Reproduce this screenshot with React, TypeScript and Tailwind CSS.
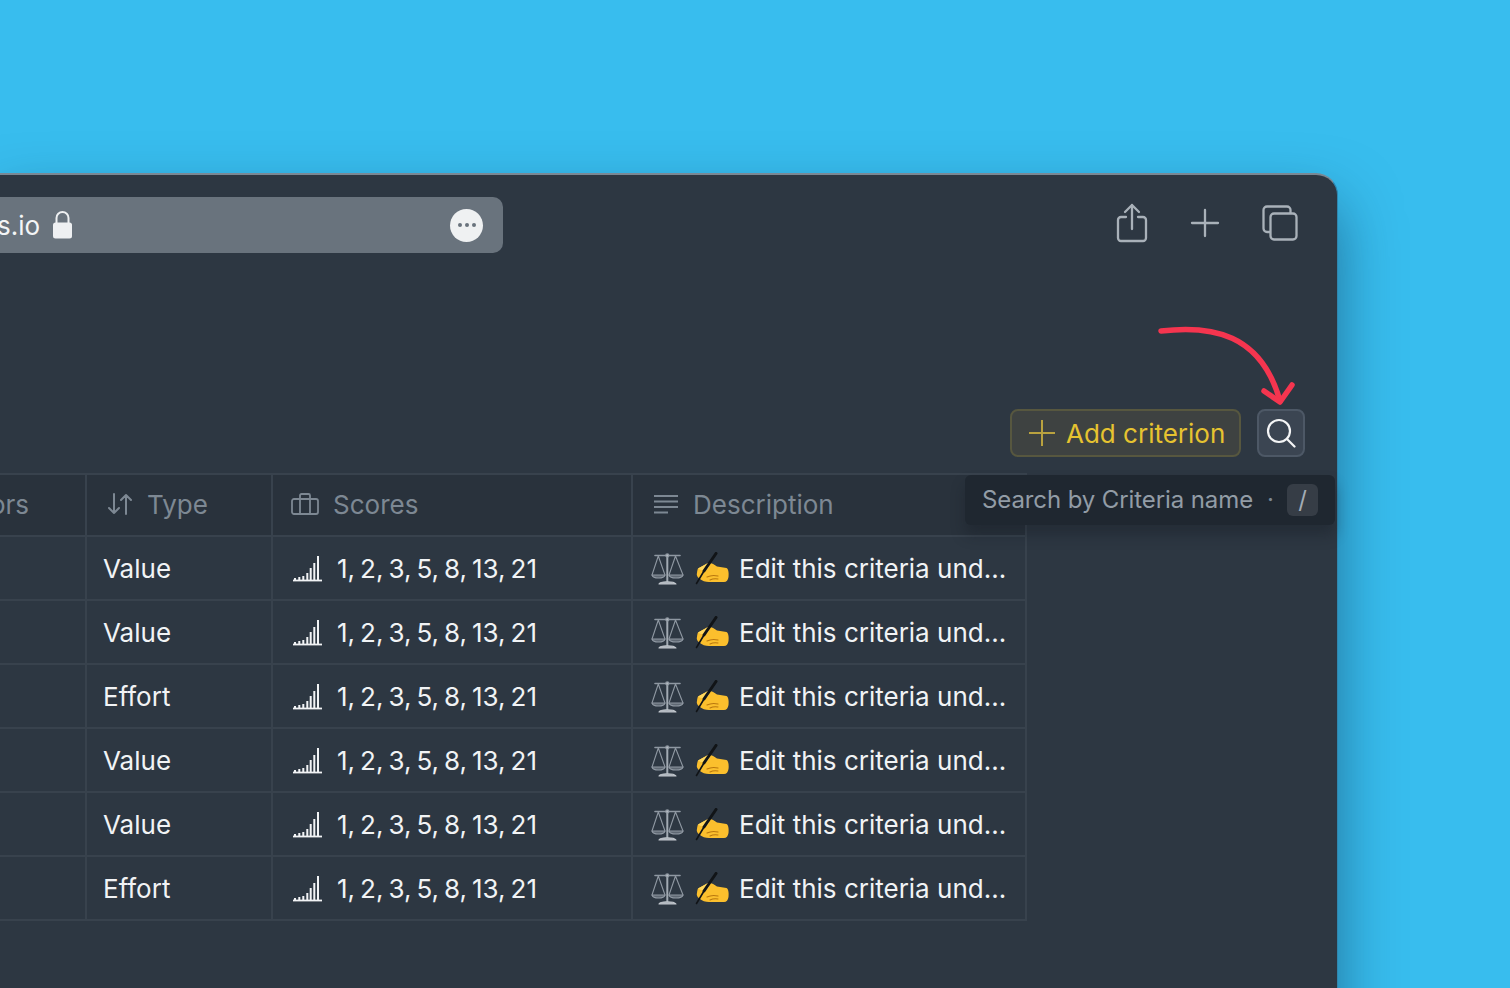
import React from "react";

const ROWS = ["Value", "Value", "Effort", "Value", "Value", "Effort"];

const COL_1 = "w-[87px] shrink-0 border-r-2 border-[#38424d]";
const COL_2 = "w-[186px] shrink-0 border-r-2 border-[#38424d]";
const COL_3 = "w-[360px] shrink-0 border-r-2 border-[#38424d]";
const COL_4 = "w-[394px] shrink-0 border-r-2 border-[#38424d]";

const SignalIcon: React.FC = () => (
  <svg width="30" height="26" viewBox="0 0 30 26" fill="none" stroke="#f1f3f5">
    <path d="M1 24.500h29" strokeWidth="1.800" />
    <path d="M3 24v-2M7.300 24v-3M11.300 24v-4M15.300 24v-7M18.700 24V12M22.300 24V7M26 24V0" strokeWidth="2" />
  </svg>
);

const ScaleIcon: React.FC = () => (
  <svg width="34" height="34" viewBox="0 0 34 34" fill="none" stroke="#8f98a2" strokeWidth="1.100" strokeLinecap="round" strokeLinejoin="round">
    <path d="M16.300 3v26" strokeWidth="2" stroke="#a2aab3" />
    <path d="M4 3.500h25" strokeWidth="1.600" />
    <path d="M7.300 4 1 23M7.300 4 14 23M24.500 4 18 23M24.500 4 32 23" />
    <path d="M1 23c1 4 12 4 13 0zM18 23c1 4 13 4 14 0z" fill="#5f6873" />
    <path d="M8 32c1-3 15-3 17 0z" fill="#a9b0b8" stroke="#c3c8ce" />
    <circle cx="16.300" cy="3.500" r="1.600" fill="#b5bbc2" />
  </svg>
);

const WritingHand: React.FC = () => (
  <svg width="36" height="34" viewBox="0 0 36 34">
    <path d="M3 16.500 13 11c3-1 6 2 9 3.500l9.500 1.500c2 1 2.500 5 2 9-.5 3-2 5-4.500 5H17c-4 0-7.500 0-10.500-2C3.500 26 1 24 2 21c.2-2 .5-3.500 1-4.500z" fill="#fbbf2d" />
    <path d="M3 16.500 13 11c2 2 1 5-1 6.500-3 1.500-6 1-9-1z" fill="#ffd75e" />
    <path d="M12 25c3-1.500 7-2 11-1M15 28c2-1 5-1.500 8-1" stroke="#b9770e" strokeWidth="1.100" fill="none" strokeLinecap="round" />
    <path d="M21 1.500 9 19" stroke="#111417" strokeWidth="3" fill="none" strokeLinecap="round" />
    <path d="M9 19 1.500 31.500" stroke="#111417" strokeWidth="1.600" fill="none" strokeLinecap="round" />
  </svg>
);

const HeaderCell: React.FC<{ className: string; icon?: React.ReactNode; label: string }> = ({ className, icon, label }) => (
  <div className={`${className} flex items-center pb-[2px]`}>
    {icon}
    <span>{label}</span>
  </div>
);

export default function App() {
  return (
    <div className="relative h-[988px] w-[1510px] overflow-hidden bg-[#38bdee] pt-[173px] font-['Inter',sans-serif]">
      <div className="h-[900px] w-[1338px] rounded-tr-[22px] border-t-2 border-r border-t-[#7a8894] border-r-[#2f86ae] bg-[#2d3742] shadow-[0_30px_60px_rgba(10,40,70,0.5)]">
        {/* barre du navigateur */}
        <div className="flex items-start justify-between pt-[22px] pr-[39px]">
          <div className="flex h-[56px] w-[503px] items-center justify-between rounded-r-[10px] bg-[#69737d] pr-[20px] text-[26px] text-[#f4f5f6]">
            <div className="-ml-[3px] flex items-center gap-[12px]">
              <span>s.io</span>
              <svg width="21" height="30" viewBox="0 0 21 30" fill="none">
                <path d="M4.500 14V8a6 6 0 0 1 12 0v6" stroke="#eef0f2" strokeWidth="2" />
                <rect x="1" y="12.500" width="19" height="16" rx="2.500" fill="#eef0f2" />
              </svg>
            </div>
            <div className="flex h-[33px] w-[33px] items-center justify-center gap-[3px] rounded-full bg-[#eff1f2]">
              <span className="h-[4px] w-[4px] rounded-full bg-[#69737d]" />
              <span className="h-[4px] w-[4px] rounded-full bg-[#69737d]" />
              <span className="h-[4px] w-[4px] rounded-full bg-[#69737d]" />
            </div>
          </div>
          <div className="flex items-center gap-[42px] pt-[6px] text-[#a9b1b9]">
            <svg width="32" height="40" viewBox="0 0 32 40" fill="none" stroke="currentColor" strokeWidth="2.300" strokeLinecap="round" strokeLinejoin="round">
              <path d="M10 14H5a3 3 0 0 0-3 3v18a3 3 0 0 0 3 3h22a3 3 0 0 0 3-3V17a3 3 0 0 0-3-3h-5" />
              <path d="M16 26V2M9 9l7-7 7 7" />
            </svg>
            <svg width="30" height="30" viewBox="0 0 30 30" fill="none" stroke="currentColor" strokeWidth="2.300" strokeLinecap="round">
              <path d="M15 2v26M2 15h26" />
            </svg>
            <svg width="36" height="36" viewBox="0 0 36 36" fill="none" stroke="currentColor" strokeWidth="2.300" strokeLinejoin="round">
              <path d="M8 27H5a3.500 3.500 0 0 1-3.500-3.500V5A3.500 3.500 0 0 1 5 1.500h20A3.500 3.500 0 0 1 28.500 5v3" />
              <rect x="8.500" y="8.500" width="26" height="26" rx="3.500" />
            </svg>
          </div>
        </div>

        {/* actions */}
        <div className="mt-[156px] flex items-center justify-end gap-[16px] pr-[32px]">
          <button className="flex h-[48px] w-[231px] items-center gap-[10px] rounded-[8px] border-2 border-[#57573f] bg-[#3e4241] pl-[16px] text-[26px] text-[#e6c330]">
            <svg width="28" height="28" viewBox="0 0 28 28" fill="none" stroke="#b9a23f" strokeWidth="2">
              <path d="M14 1v26M1 14h26" />
            </svg>
            <span>Add criterion</span>
          </button>
          <button className="flex h-[48px] w-[48px] items-center justify-center rounded-[8px] border-2 border-[#4d5866] bg-[#3b4552]">
            <svg width="30" height="30" viewBox="0 0 30 30" fill="none" stroke="#f4f5f6" strokeWidth="2.200" strokeLinecap="round">
              <circle cx="13" cy="13" r="11" />
              <path d="m21 21 7.500 7.500" />
            </svg>
          </button>
        </div>

        {/* tableau */}
        <div className="mt-[16px] w-[1027px] text-[26px] text-[#f1f3f5]">
          <div className="flex h-[64px] border-y-2 border-[#38424d] bg-[#29323c] text-[#7d8893]">
            <HeaderCell className={`${COL_1} justify-end pr-[56px]`} label="ors" />
            <HeaderCell
              className={`${COL_2} pl-[20px]`}
              label="Type"
              icon={
                <svg className="mr-[14px]" width="26" height="24" viewBox="0 0 26 24" fill="none" stroke="currentColor" strokeWidth="2" strokeLinecap="round" strokeLinejoin="round">
                  <path d="M7 2v19M2 16l5 5 5-5M19 22V3M14 8l5-5 5 5" />
                </svg>
              }
            />
            <HeaderCell
              className={`${COL_3} pl-[18px]`}
              label="Scores"
              icon={
                <svg className="mr-[14px]" width="28" height="22" viewBox="0 0 28 22" fill="none" stroke="currentColor" strokeWidth="1.800" strokeLinejoin="round">
                  <rect x="1" y="6" width="26" height="15" rx="2" />
                  <path d="M9 21V2.500a1.500 1.500 0 0 1 1.500-1.500h7A1.500 1.500 0 0 1 19 2.500V21" />
                </svg>
              }
            />
            <HeaderCell
              className={`${COL_4} pl-[20px]`}
              label="Description"
              icon={
                <svg className="mr-[14px]" width="26" height="20" viewBox="0 0 26 20" fill="none" stroke="currentColor" strokeWidth="2">
                  <path d="M1 2h24M1 7.500h24M1 13h24M1 18.500h14" />
                </svg>
              }
            />
          </div>
          {ROWS.map((type, i) => (
            <div key={i} className="flex h-[64px] border-b-2 border-[#38424d]">
              <div className={COL_1} />
              <div className={`${COL_2} flex items-center pt-[1px] pl-[16px]`}>{type}</div>
              <div className={`${COL_3} flex items-center gap-[15px] pt-[1px] pl-[19px]`}>
                <SignalIcon />
                <span className="[word-spacing:-2.300px]">1, 2, 3, 5, 8, 13, 21</span>
              </div>
              <div className={`${COL_4} flex items-center pt-[1px] pl-[18px] whitespace-nowrap`}>
                <ScaleIcon />
                <span className="ml-[10px]"><WritingHand /></span>
                <span className="ml-[8px]">Edit this criteria und...</span>
              </div>
            </div>
          ))}
        </div>
      </div>

      {/* infobulle de recherche */}
      <div className="absolute top-[475px] left-[965px] flex h-[50px] w-[370px] items-center rounded-[6px] bg-[#1f2730] px-[17px] pb-[1px] text-[24px] tracking-[-0.1px] text-[#929ca6] shadow-[0_10px_14px_rgba(20,26,33,0.35)]">
        <span>Search by Criteria name</span>
        <span className="ml-[14px] text-[#7d8893]">·</span>
        <span className="mt-[1px] ml-auto flex h-[32px] w-[31px] items-center justify-center rounded-[6px] bg-[#363d46] text-[#a3acb5]">/</span>
      </div>

      {/* flèche */}
      <svg className="absolute top-[320px] left-[1150px]" width="150" height="90" viewBox="0 0 150 90" fill="none" stroke="#f5354f" strokeWidth="5.500" strokeLinecap="round" strokeLinejoin="round">
        <path d="M11 11c50-6 100 2 119 70" />
        <path d="m114 71 16 11 12-17" />
      </svg>
    </div>
  );
}
